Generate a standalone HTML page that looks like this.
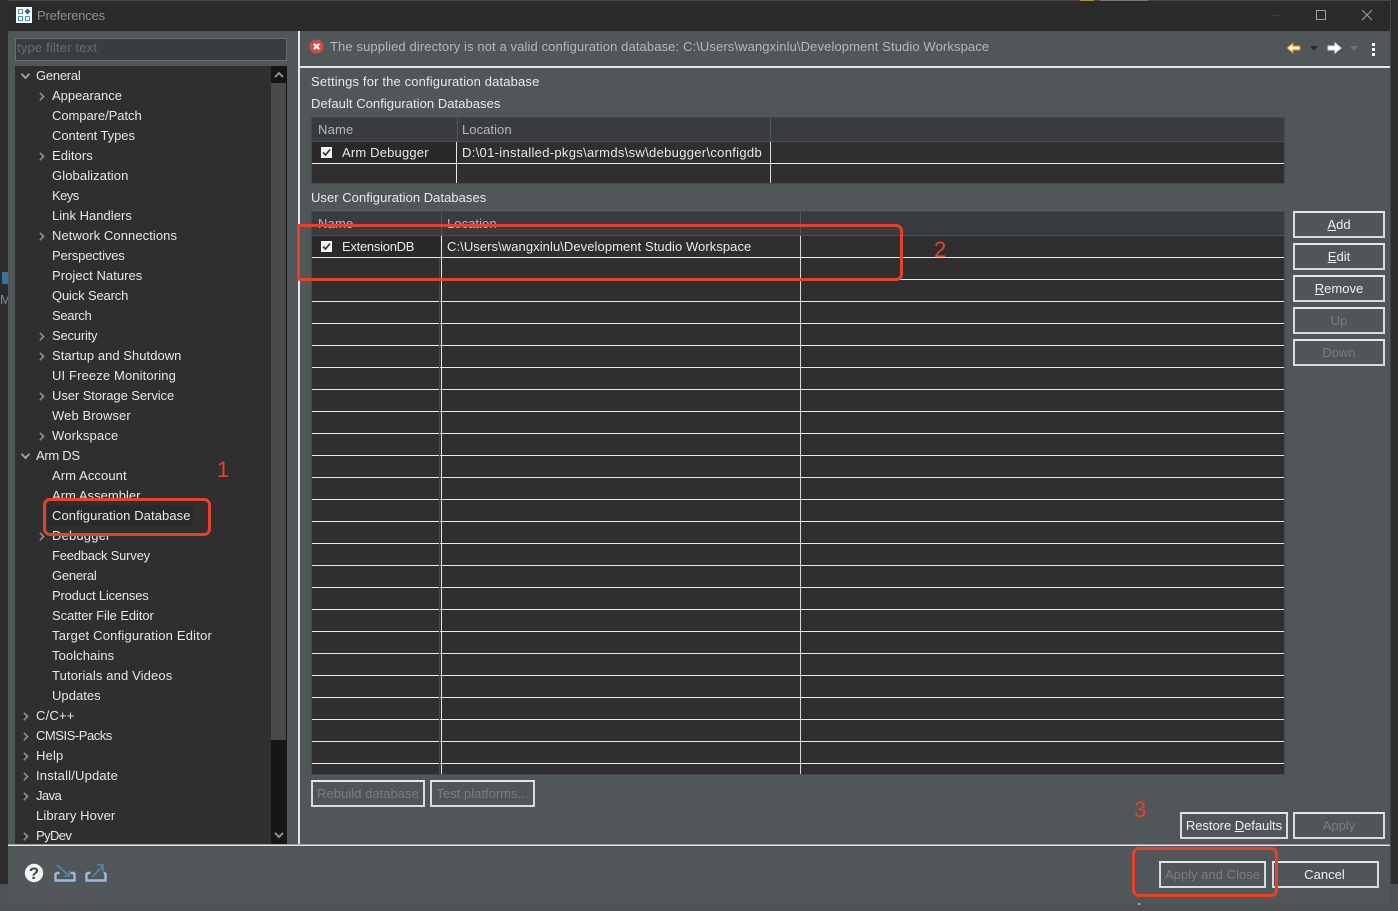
<!DOCTYPE html>
<html><head><meta charset="utf-8"><style>
html,body{margin:0;padding:0;width:1398px;height:911px;overflow:hidden;background:#2c2c2c}
*{box-sizing:border-box}
body{font-family:"Liberation Sans","Noto Sans CJK SC",sans-serif;font-size:13px;color:#e6eaec;position:relative}
.a{position:absolute}
.t{position:absolute;white-space:nowrap;line-height:20px;height:20px;letter-spacing:.18px}
.tree .t{color:#e4e8ea}
.btn{position:absolute;border:2px solid #d8dadb;border-top-color:#e4e6e7;background:#505558;color:#eef0f1;text-align:center;line-height:23px;font-size:13px;white-space:nowrap;letter-spacing:.03px}
.dis{color:#7a7d7f}
.c{position:absolute;width:7px;height:7px;border-top:2px solid #8b8b8b;border-right:2px solid #8b8b8b;transform:rotate(45deg) scale(.85)}
.d{position:absolute;width:7px;height:7px;border-bottom:2px solid #a0a0a0;border-right:2px solid #a0a0a0;transform:rotate(45deg) scale(.95)}
.rb{position:absolute;border:3px solid #e8412a;border-radius:7px}
.n{position:absolute;color:#e8412a;font-size:22px;line-height:24px;font-weight:400}
u{text-decoration:underline}
</style></head><body>

<!-- outside slivers -->
<div class="a" style="left:0;top:884px;width:8px;height:27px;background:#505355"></div>
<div class="a" style="left:0;top:904px;width:1398px;height:7px;background:#4d5153"></div>
<div class="a" style="left:1390px;top:884px;width:8px;height:27px;background:#4d5153"></div>
<div class="a" style="left:8px;top:0;width:1383px;height:1px;background:#454545"></div>
<div class="a" style="left:1390px;top:0;width:1px;height:884px;background:#454545"></div>
<div class="a" style="left:1080px;top:0;width:14px;height:1px;background:#a8903c"></div>
<div class="a" style="left:1100px;top:0;width:48px;height:1px;background:#777"></div>
<div class="a" style="left:2px;top:272px;width:6px;height:12px;background:#3d6f9e"></div>
<div class="t" style="left:0;top:291px;color:#7f8a90;font-size:13px;line-height:18px">M</div>

<!-- window -->
<div class="a" style="left:8px;top:1px;width:1382px;height:903px;background:#515658"></div>
<div class="a" style="left:8px;top:1px;width:1382px;height:30px;background:#2b2b2b"></div>
<div class="a" style="left:16px;top:7px;width:16px;height:16px;background:#fff"></div>
<svg class="a" style="left:16px;top:7px" width="16" height="16"><g fill="none" stroke="#3f9bc4" stroke-width="1"><rect x="2.5" y="2.5" width="4" height="4"/><rect x="2.5" y="9.5" width="4" height="4"/><rect x="9.5" y="9.5" width="4" height="4"/></g><path d="M11.5 1.5l3 3-3 3-3-3z" fill="#0f6ea8"/></svg>
<div class="t" style="left:37px;top:6px;color:#8b8e90;letter-spacing:-.2px">Preferences</div>
<div class="a" style="left:1271px;top:15px;width:10px;height:1px;background:#3c3c3c"></div>
<div class="a" style="left:1316px;top:10px;width:10px;height:10px;border:1px solid #a0a0a0"></div>
<svg class="a" style="left:1361px;top:9px" width="12" height="12"><path d="M1 1l10 10M11 1L1 11" stroke="#a0a0a0" stroke-width="1" fill="none"/></svg>

<!-- filter -->
<div class="a" style="left:15px;top:38px;width:272px;height:23px;background:#3b3c3d;border:1px solid #6b6e70"></div>
<div class="t" style="left:17px;top:38px;color:#696b6c">type filter text</div>

<!-- tree -->
<div class="a tree" style="left:15px;top:66px;width:272px;height:778px;background:#2f2f2f;overflow:hidden">
<div class="a" style="left:256px;top:0;width:16px;height:778px;background:#161616"></div>
<div class="a" style="left:256px;top:17px;width:15px;height:657px;background:#4a4a4a"></div>
<svg class="a" style="left:258px;top:4px" width="12" height="10"><path d="M2 7l4-4 4 4" stroke="#8f8f8f" stroke-width="2" fill="none"/></svg>
<svg class="a" style="left:258px;top:764px" width="12" height="10"><path d="M2 3l4 4 4-4" stroke="#8f8f8f" stroke-width="2" fill="none"/></svg>
<div class="a" style="left:33px;top:439px;width:145px;height:20px;background:#292929"></div>
</div>
<div class="tree">
<div class="d" style="left:22px;top:71px"></div><div class="t" style="left:36px;top:66px;letter-spacing:-.25px">General</div>
<div class="c" style="left:37px;top:93px"></div><div class="t" style="left:52px;top:86px;letter-spacing:-.02px">Appearance</div>
<div class="t" style="left:52px;top:106px;letter-spacing:-.05px">Compare/Patch</div>
<div class="t" style="left:52px;top:126px;letter-spacing:-.05px">Content Types</div>
<div class="c" style="left:37px;top:153px"></div><div class="t" style="left:52px;top:146px;letter-spacing:.04px">Editors</div>
<div class="t" style="left:52px;top:166px;letter-spacing:.1px">Globalization</div>
<div class="t" style="left:52px;top:186px;letter-spacing:-.57px">Keys</div>
<div class="t" style="left:52px;top:206px;letter-spacing:.03px">Link Handlers</div>
<div class="c" style="left:37px;top:233px"></div><div class="t" style="left:52px;top:226px;letter-spacing:.08px">Network Connections</div>
<div class="t" style="left:52px;top:246px;letter-spacing:-.15px">Perspectives</div>
<div class="t" style="left:52px;top:266px;letter-spacing:.05px">Project Natures</div>
<div class="t" style="left:52px;top:286px;letter-spacing:-.15px">Quick Search</div>
<div class="t" style="left:52px;top:306px;letter-spacing:-.3px">Search</div>
<div class="c" style="left:37px;top:333px"></div><div class="t" style="left:52px;top:326px;letter-spacing:-.2px">Security</div>
<div class="c" style="left:37px;top:353px"></div><div class="t" style="left:52px;top:346px;letter-spacing:.04px">Startup and Shutdown</div>
<div class="t" style="left:52px;top:366px;letter-spacing:.13px">UI Freeze Monitoring</div>
<div class="c" style="left:37px;top:393px"></div><div class="t" style="left:52px;top:386px;letter-spacing:-.07px">User Storage Service</div>
<div class="t" style="left:52px;top:406px;letter-spacing:.09px">Web Browser</div>
<div class="c" style="left:37px;top:433px"></div><div class="t" style="left:52px;top:426px">Workspace</div>
<div class="d" style="left:22px;top:451px"></div><div class="t" style="left:36px;top:446px;letter-spacing:-.3px">Arm DS</div>
<div class="t" style="left:52px;top:466px;letter-spacing:.09px">Arm Account</div>
<div class="t" style="left:52px;top:486px;letter-spacing:.03px">Arm Assembler</div>
<div class="t" style="left:52px;top:506px;letter-spacing:.09px">Configuration Database</div>
<div class="c" style="left:37px;top:533px"></div><div class="t" style="left:52px;top:526px">Debugger</div>
<div class="t" style="left:52px;top:546px;letter-spacing:-.22px">Feedback Survey</div>
<div class="t" style="left:52px;top:566px;letter-spacing:-.25px">General</div>
<div class="t" style="left:52px;top:586px;letter-spacing:-.2px">Product Licenses</div>
<div class="t" style="left:52px;top:606px;letter-spacing:-.08px">Scatter File Editor</div>
<div class="t" style="left:52px;top:626px;letter-spacing:.2px">Target Configuration Editor</div>
<div class="t" style="left:52px;top:646px;letter-spacing:.08px">Toolchains</div>
<div class="t" style="left:52px;top:666px;letter-spacing:.13px">Tutorials and Videos</div>
<div class="t" style="left:52px;top:686px;letter-spacing:.04px">Updates</div>
<div class="c" style="left:21px;top:713px"></div><div class="t" style="left:36px;top:706px">C/C++</div>
<div class="c" style="left:21px;top:733px"></div><div class="t" style="left:36px;top:726px;letter-spacing:-.46px">CMSIS-Packs</div>
<div class="c" style="left:21px;top:753px"></div><div class="t" style="left:36px;top:746px">Help</div>
<div class="c" style="left:21px;top:773px"></div><div class="t" style="left:36px;top:766px">Install/Update</div>
<div class="c" style="left:21px;top:793px"></div><div class="t" style="left:36px;top:786px;letter-spacing:-.57px">Java</div>
<div class="t" style="left:36px;top:806px;letter-spacing:.1px">Library Hover</div>
<div class="c" style="left:21px;top:833px"></div><div class="t" style="left:36px;top:826px;letter-spacing:-.6px">PyDev</div>
</div>

<!-- sashes -->
<div class="a" style="left:298px;top:31px;width:2px;height:814px;background:#e4e6e7"></div>
<div class="a" style="left:300px;top:66px;width:1090px;height:2px;background:#e4e6e7"></div>
<div class="a" style="left:8px;top:844px;width:1382px;height:1px;background:#9a9c9d"></div>
<div class="a" style="left:8px;top:845px;width:1382px;height:1px;background:#e4e6e7"></div>

<!-- message bar -->
<svg class="a" style="left:309px;top:39px" width="15" height="15"><circle cx="7.5" cy="7.5" r="7" fill="#d24a45"/><path d="M4.8 4.8l5.4 5.4M10.2 4.8l-5.4 5.4" stroke="#fff" stroke-width="2.2"/></svg>
<div class="t" style="left:330px;top:37px;color:#b4b8ba;letter-spacing:.11px">The supplied directory is not a valid configuration database: C:\Users\wangxinlu\Development Studio Workspace</div>
<svg class="a" style="left:1286px;top:41px" width="16" height="14"><path d="M1 7l6-5v3h7v4H7v3z" fill="#fff2c2" stroke="#d18a16" stroke-width="1"/></svg>
<svg class="a" style="left:1309px;top:46px" width="10" height="6"><path d="M1 0h8L5 5z" fill="#2e2e2e"/></svg>
<svg class="a" style="left:1326px;top:41px" width="16" height="14"><path d="M15 7L9 2v3H2v4h7v3z" fill="#fff" stroke="#ddd" stroke-width="1"/></svg>
<svg class="a" style="left:1349px;top:46px" width="10" height="6"><path d="M1 0h8L5 5z" fill="#6e7173"/></svg>
<div class="a" style="left:1372px;top:43px;width:3px;height:3px;background:#fff"></div>
<div class="a" style="left:1372px;top:48px;width:3px;height:3px;background:#fff"></div>
<div class="a" style="left:1372px;top:53px;width:3px;height:3px;background:#fff"></div>

<div class="t" style="left:311px;top:72px;letter-spacing:.15px">Settings for the configuration database</div>
<div class="t" style="left:311px;top:94px;letter-spacing:.05px">Default Configuration Databases</div>

<!-- table 1 -->
<div class="a" style="left:311px;top:117px;width:974px;height:67px;background:#2f2f2f;border:1px solid #45494b"></div>
<div class="a" style="left:312px;top:118px;width:972px;height:24px;background:#383c3e;border-bottom:1px solid #4a4e50"></div>
<div class="a" style="left:312px;top:163px;width:972px;height:1px;background:#e8e8e8"></div>
<div class="a" style="left:312px;top:142px;width:144px;height:21px;background:#292929"></div>
<div class="a" style="left:457px;top:118px;width:1px;height:24px;background:#52575a"></div>
<div class="a" style="left:770px;top:118px;width:1px;height:24px;background:#52575a"></div>
<div class="a" style="left:456px;top:142px;width:1px;height:41px;background:#e8e8e8"></div>
<div class="a" style="left:770px;top:142px;width:1px;height:41px;background:#d8d8d8"></div>
<div class="t" style="left:318px;top:120px;color:#b4b8ba">Name</div>
<div class="t" style="left:462px;top:120px;color:#b4b8ba;letter-spacing:.06px">Location</div>
<div class="a" style="left:321px;top:147px;width:11px;height:11px;background:#f2f2f2"></div>
<svg class="a" style="left:321px;top:147px" width="11" height="11"><path d="M2 5.5l2.5 2.5L9 2.5" stroke="#333" stroke-width="1.6" fill="none"/></svg>
<div class="t" style="left:342px;top:143px">Arm Debugger</div>
<div class="t" style="left:462px;top:143px;letter-spacing:.31px">D:\01-installed-pkgs\armds\sw\debugger\configdb</div>

<div class="t" style="left:311px;top:188px;letter-spacing:.04px">User Configuration Databases</div>

<!-- table 2 -->
<div class="a" style="left:311px;top:211px;width:974px;height:564px;background:#2f2f2f;border:1px solid #45494b"></div>
<div class="a" style="left:312px;top:212px;width:972px;height:24px;background:#383c3e;border-bottom:1px solid #4a4e50"></div>
<div class="a" style="left:312px;top:236px;width:972px;height:538px;background:repeating-linear-gradient(to bottom,transparent 0,transparent 21px,#e8e8e8 21px,#e8e8e8 22px)"></div>
<div class="a" style="left:312px;top:236px;width:128px;height:21px;background:#292929"></div>
<div class="a" style="left:441px;top:212px;width:1px;height:24px;background:#52575a"></div>
<div class="a" style="left:800px;top:212px;width:1px;height:24px;background:#52575a"></div>
<div class="a" style="left:439px;top:258px;width:1px;height:516px;background:#45494b"></div>
<div class="a" style="left:441px;top:236px;width:1px;height:538px;background:#e8e8e8"></div>
<div class="a" style="left:800px;top:236px;width:1px;height:538px;background:#d8d8d8"></div>
<div class="t" style="left:318px;top:214px;color:#b4b8ba">Name</div>
<div class="t" style="left:447px;top:214px;color:#b4b8ba;letter-spacing:.06px">Location</div>
<div class="a" style="left:321px;top:241px;width:11px;height:11px;background:#f2f2f2"></div>
<svg class="a" style="left:321px;top:241px" width="11" height="11"><path d="M2 5.5l2.5 2.5L9 2.5" stroke="#333" stroke-width="1.6" fill="none"/></svg>
<div class="t" style="left:342px;top:237px;letter-spacing:-.27px">ExtensionDB</div>
<div class="t" style="left:447px;top:237px;letter-spacing:.07px">C:\Users\wangxinlu\Development Studio Workspace</div>

<!-- buttons -->
<div class="btn" style="left:1293px;top:211px;width:92px;height:27px"><u>A</u>dd</div>
<div class="btn" style="left:1293px;top:243px;width:92px;height:27px"><u>E</u>dit</div>
<div class="btn" style="left:1293px;top:275px;width:92px;height:27px"><u>R</u>emove</div>
<div class="btn dis" style="left:1293px;top:307px;width:92px;height:27px">Up</div>
<div class="btn dis" style="left:1293px;top:339px;width:92px;height:27px">Down</div>
<div class="btn dis" style="left:311px;top:780px;width:114px;height:27px">Rebuild database</div>
<div class="btn dis" style="left:430px;top:780px;width:105px;height:27px">Test platforms...</div>
<div class="btn" style="left:1180px;top:812px;width:108px;height:27px;letter-spacing:-.04px">Restore <u>D</u>efaults</div>
<div class="btn dis" style="left:1293px;top:812px;width:92px;height:27px">Apply</div>
<div class="btn dis" style="left:1159px;top:861px;width:107px;height:27px">Apply and Close</div>
<div class="btn" style="left:1272px;top:861px;width:107px;height:27px;padding-right:2px">Cancel</div>

<!-- bottom icons -->
<svg class="a" style="left:24px;top:863px" width="20" height="20"><circle cx="10" cy="10" r="9.2" fill="#f4f4f4"/><text x="10" y="16" text-anchor="middle" font-family="Liberation Sans" font-weight="700" font-size="17" fill="#43484b">?</text></svg>
<svg class="a" style="left:53px;top:863px" width="24" height="20"><path d="M2.5 10v7.5h19V10M2.5 10h4M21.500 10h-4" fill="none" stroke="#9db8dc" stroke-width="2.4"/><path d="M4 2l12 11M16 8v5h-5" fill="none" stroke="#4d88ab" stroke-width="1.6"/></svg>
<svg class="a" style="left:84px;top:863px" width="24" height="20"><path d="M2.500 10v7.500h19V10M2.500 10h4M21.500 10h-2" fill="none" stroke="#9db8dc" stroke-width="2.4"/><path d="M8 14L19 3M13 2h6v6" fill="none" stroke="#4d88ab" stroke-width="1.6"/></svg>

<!-- annotations -->
<div class="rb" style="left:43px;top:498px;width:168px;height:38px"></div>
<div class="rb" style="left:297px;top:224px;width:606px;height:57px;border-radius:0 7px 7px 3px"></div>
<div class="rb" style="left:1132px;top:847px;width:146px;height:50px"></div>
<div class="n" style="left:217px;top:458px">1</div>
<div class="n" style="left:934px;top:238px">2</div>
<div class="n" style="left:1134px;top:798px">3</div>
<div class="a" style="left:1138px;top:903px;width:2px;height:2px;background:#aaa"></div>
</body></html>
